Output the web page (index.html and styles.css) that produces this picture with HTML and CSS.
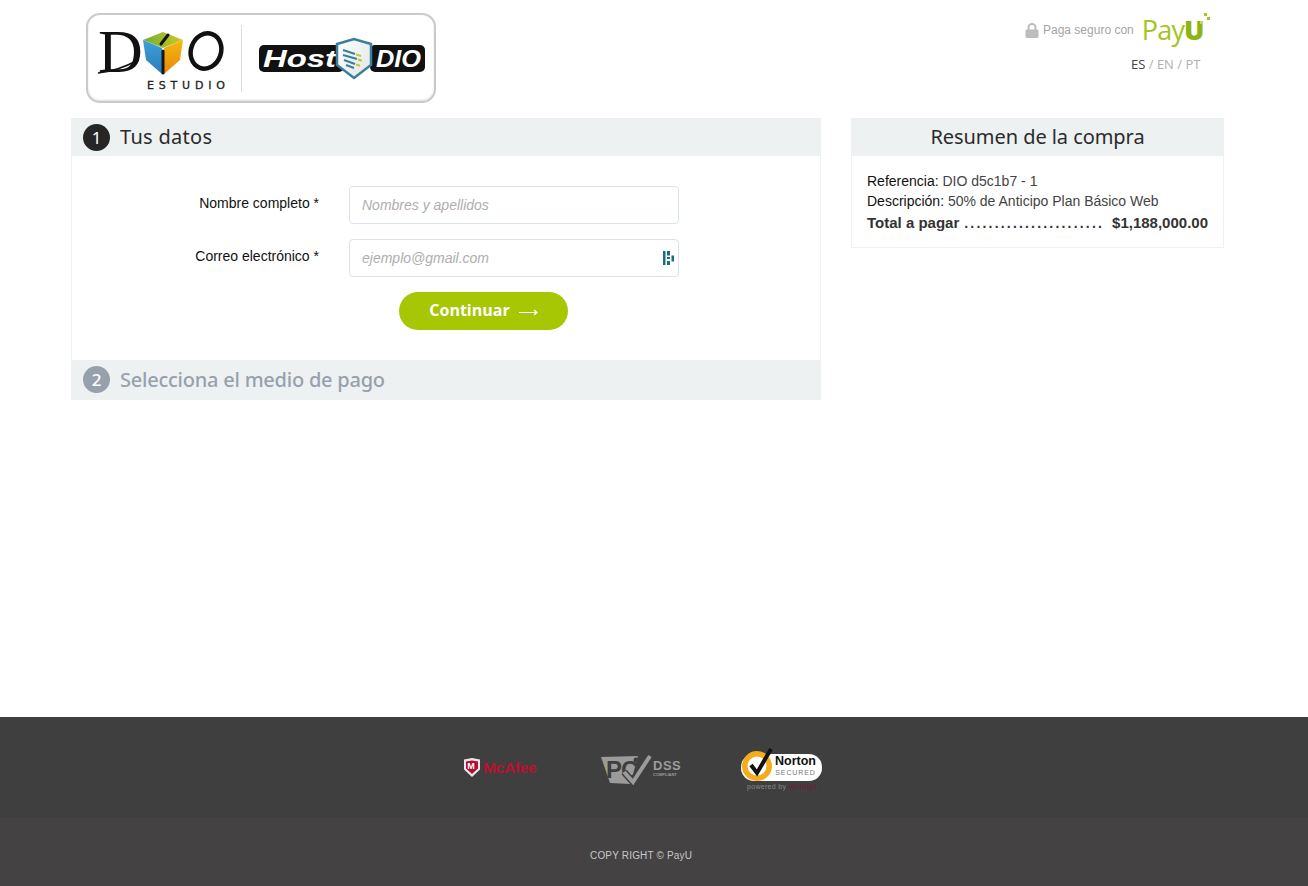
FILE: index.html
```html
<!DOCTYPE html>
<html lang="es">
<head>
<meta charset="utf-8">
<title>PayU</title>
<link rel="stylesheet" href="styles.css">
</head>
<body>
<div class="page">
  <header class="top">
    <div class="logo-box">
      <svg class="logo-svg" width="346" height="86" viewBox="0 0 346 86">
        <defs>
          <linearGradient id="cubeTop" x1="0" y1="0" x2="1" y2="0"><stop offset="0" stop-color="#6fae3a"/><stop offset="1" stop-color="#d3c81e"/></linearGradient>
          <linearGradient id="cubeRight" x1="0" y1="0" x2="0" y2="1"><stop offset="0" stop-color="#f5b90f"/><stop offset="1" stop-color="#e8860c"/></linearGradient>
          <linearGradient id="cubeLeft" x1="0" y1="0" x2="0" y2="1"><stop offset="0" stop-color="#3fa0d8"/><stop offset="1" stop-color="#2a7db8"/></linearGradient>
          <linearGradient id="shieldFill" x1="0" y1="0" x2="1" y2="1"><stop offset="0" stop-color="#ffffff"/><stop offset="1" stop-color="#dfe5e7"/></linearGradient>
        </defs>
        <text class="dio-letter" x="10" y="57">D</text>
        <path d="M10 58 Q30 56 50 45" fill="none" stroke="#111" stroke-width="1.500"/>
        <polygon points="75,17 55,25 75,33 95,25" fill="url(#cubeTop)"/>
        <polygon points="55,25 74,33 74,59 58,45" fill="url(#cubeLeft)"/>
        <polygon points="76,33 95,25 92,45 76,59" fill="url(#cubeRight)"/>
        <path d="M80 20 L73 29" stroke="#151515" stroke-width="3" stroke-linecap="round"/>
        <path d="M75 36 L75 58" stroke="#151515" stroke-width="3" stroke-linecap="round"/>
        <ellipse cx="118" cy="36" rx="15" ry="18" fill="none" stroke="#111" stroke-width="4.500" transform="rotate(20 118 36)"/>
        <text class="dio-sub" x="59" y="74" textLength="78" lengthAdjust="spacing">ESTUDIO</text>
        <rect x="153" y="10" width="1" height="67" fill="#dcdcdc"/>
        <rect x="171" y="30" width="85" height="27" rx="5" fill="#111"/>
        <rect x="282" y="30" width="55" height="27" rx="5" fill="#111"/>
        <text class="host-text" x="175" y="52" textLength="73" lengthAdjust="spacingAndGlyphs">Host</text>
        <text class="host-text" x="288" y="52" textLength="45" lengthAdjust="spacingAndGlyphs">DIO</text>
        <path d="M249 29 L266 24 L283 29 L283 50 L266 63 L249 50 Z" fill="url(#shieldFill)" stroke="#3a7f9c" stroke-width="2.500"/>
        <path d="M255 35l12 4M255 40l14 4M256 45l11 4M258 50l8 3" stroke="#3a7f9c" stroke-width="2"/>
        <path d="M268 39.500l5 1.500M270 44.500l4 1.200M268 49.500l4 1.200" stroke="#c0c92f" stroke-width="2"/>
      </svg>
    </div>
    <div class="secure">
      <div class="secure-row">
        <svg class="lock" width="14" height="15" viewBox="0 0 14 15"><path d="M3.500 7V4.500a3.500 3.500 0 0 1 7 0V7" fill="none" stroke="#bdbdbd" stroke-width="2"/><rect x="0.500" y="6.500" width="13" height="8.500" rx="1.500" fill="#bdbdbd"/></svg>
        <span class="secure-text">Paga seguro con</span>
        <span class="payu">Pay<span class="payu-u">U</span><svg class="payu-dots" width="12" height="14" viewBox="0 0 12 14"><rect x="6" y="0" width="3" height="3" fill="#a8c520"/><rect x="9" y="4" width="3" height="3" fill="#a8c520"/><rect x="2" y="8" width="3" height="3" fill="#c5d85c"/></svg></span>
      </div>
      <div class="lang"><span class="lang-on">ES</span> / EN / PT</div>
    </div>
  </header>

  <main class="columns">
    <section class="left">
      <h2 class="step-head"><span class="num">1</span>Tus datos</h2>
      <form class="form">
        <div class="field">
          <label class="field-label">Nombre completo *</label>
          <div class="input"><span class="ph">Nombres y apellidos</span></div>
        </div>
        <div class="field">
          <label class="field-label">Correo electrónico *</label>
          <div class="input"><span class="ph">ejemplo@gmail.com</span>
            <svg class="dash" width="11" height="14" viewBox="0 0 11 14"><path d="M0 0h2.500v14H0zM4 0h3v4.500H4zM4 6h3v2H4zM4 10h3v4H4zM8.500 4.500H11v6H8.500z" fill="#1b6c80"/></svg>
          </div>
        </div>
        <div class="btn-row"><button type="button" class="btn">Continuar<svg class="arrow" width="19" height="7" viewBox="0 0 19 7"><path d="M0 3.500h17M15 1l3 2.500-3 2.500" fill="none" stroke="#fff" stroke-width="1.200"/></svg></button></div>
      </form>
      <h2 class="step-head off"><span class="num">2</span>Selecciona el medio de pago</h2>
    </section>

    <aside class="right">
      <h2 class="sum-head">Resumen de la compra</h2>
      <div class="sum-body">
        <p class="sum-line"><span class="k">Referencia:</span> DIO d5c1b7 - 1</p>
        <p class="sum-line"><span class="k">Descripción:</span> 50% de Anticipo Plan Básico Web</p>
        <p class="sum-total"><span>Total a pagar</span><span class="dots">. . . . . . . . . . . . . . . . . . . . . . .</span><span class="amount">$1,188,000.00</span></p>
      </div>
    </aside>
  </main>

  <footer class="foot">
    <div class="seals">
      <div class="seal mcafee">
        <svg width="18" height="20" viewBox="0 0 18 20"><path d="M1 1.500 9 0l8 1.500v10L9 19 1 11.500z" fill="#e8e8e8"/><path d="M3 3.500 9 2.500l6 1v7L9 16l-6-5.500z" fill="#b01030"/><text x="4.300" y="11" class="m-letter">M</text></svg>
        <span>McAfee</span>
      </div>
      <div class="seal pci">
        <svg width="56" height="32" viewBox="0 0 56 32">
          <polygon points="1,3 38,2 32,24 30,30 10,29" fill="#9b9b9b" />
          <text class="pci-word" x="6" y="24">PC</text>
          <path d="M24 18 L33 28 L50 2" fill="none" stroke="#3f3f40" stroke-width="7"/>
          <path d="M24 18 L33 28 L50 2" fill="none" stroke="#9b9b9b" stroke-width="4"/>
          <circle cx="36" cy="6" r="2.500" fill="#3f3f40"/>
        </svg>
        <div class="pci-dss"><span class="dss">DSS</span><span class="comp">COMPLIANT</span></div>
      </div>
      <div class="seal norton">
        <div class="norton-pill">
          <span class="norton-badge"><svg width="32" height="36" viewBox="0 0 32 36"><circle cx="15" cy="19" r="15" fill="#f5ac1b"/><circle cx="15" cy="19" r="9.500" fill="#fff"/><path d="M9 18l6 8L29 2" fill="none" stroke="#111" stroke-width="4"/></svg></span>
          <span class="norton-text"><b>Norton</b><i>SECURED</i></span>
        </div>
        <div class="norton-by">powered by <em>VeriSign</em></div>
      </div>
    </div>
    <div class="copy">COPY RIGHT © PayU</div>
  </footer>
</div>
</body>
</html>
```
FILE: styles.css
```css
* { box-sizing: border-box; }
html, body { margin: 0; padding: 0; background: #fff; }
body { font-family: "Liberation Sans", Arial, sans-serif; color: #333; }
.page { min-height: 886px; display: flex; flex-direction: column; }

.top { height: 118px; padding: 13px 84px 0 86px; display: flex; justify-content: space-between; }
.logo-box { width: 350px; height: 90px; border: 2px solid #c9cbcb; border-radius: 14px; box-shadow: inset 0 -1px 2px #ddd; }
.logo-svg { display: block; }
.dio-letter { font: 400 62px "Liberation Serif", serif; fill: #111; }
.dio-sub { font: 400 11px "DejaVu Sans", sans-serif; fill: #222; stroke: #222; stroke-width: 0.300px; }
.host-text { font: italic 700 23px "Liberation Sans", sans-serif; fill: #fff; }

.secure { width: 199px; display: flex; flex-direction: column; align-items: flex-start; }
.secure-row { display: flex; align-items: flex-start; height: 36px; }
.lock { margin-top: 10px; flex: none; }
.secure-text { font-size: 12px; color: #a5a5a5; margin: 10px 0 0 4px; line-height: 14px; white-space: nowrap; }
.payu { position: relative; margin: -1px 0 0 8px; font: 500 27px/36px "Open Sans", sans-serif; color: #a3c520; letter-spacing: -0.800px; white-space: nowrap; }
.payu-u { font-weight: 800; color: #8cb414; }
.payu-dots { position: absolute; right: -6px; top: 1px; }
.lang { margin: 7px 0 0 106px; font: 13px/16px "Open Sans", sans-serif; color: #b0b0b0; white-space: nowrap; }
.lang-on { color: #444; }

.columns { display: flex; align-items: flex-start; gap: 30px; padding-left: 71px; }
.left { width: 750px; border: 1px solid #eef1f2; border-top: 0; }
.step-head { margin: 0; height: 38px; background: #eef1f2; display: flex; align-items: center; padding-left: 11px; font: 400 20px/26px "Noto Sans", sans-serif; color: #2b2b2b; letter-spacing: 0.300px; }
.num { width: 27px; height: 27px; border-radius: 50%; background: #262626; color: #fff; font-size: 17px; line-height: 27px; text-align: center; margin-right: 10px; flex: none; letter-spacing: 0; }
.step-head.off { height: 39px; color: #97a1ad; font-weight: 500; letter-spacing: -0.230px; }
.off .num { background: #97a1ad; }

.form { height: 204px; padding-top: 30px; }
.field { display: flex; align-items: flex-start; margin-bottom: 15px; }
.field-label { width: 247px; text-align: right; font-size: 14px; line-height: 18px; color: #111; padding-top: 8px; }
.input { margin-left: 30px; width: 330px; height: 38px; border: 1px solid #d8e3ea; border-radius: 4px; padding-left: 12px; display: flex; align-items: center; justify-content: space-between; background: #fff; }
.ph { font-size: 14px; font-style: italic; color: #aeaeae; }
.dash { margin-right: 4px; }
.btn-row { padding-left: 327px; }
.btn { width: 169px; height: 38px; border: 0; border-radius: 19px; background: #a7c604; color: #fff; font: 700 16px "Open Sans", sans-serif; display: flex; align-items: center; justify-content: center; padding: 0 0 2px; }
.arrow { margin-left: 9px; margin-top: 4px; }

.right { width: 373px; border: 1px solid #eef1f2; border-top: 0; }
.sum-head { margin: 0; height: 38px; background: #eef1f2; text-align: center; font: 400 20px/38px "Noto Sans", sans-serif; color: #2b2b2b; letter-spacing: -0.060px; }
.sum-body { padding: 15px 15px 13px; font-size: 14px; color: #444; height: 91px; }
.sum-line { margin: 0; line-height: 20px; }
.k { color: #111; }
.sum-total { margin: 1px 0 0; display: flex; font-size: 15px; font-weight: 700; line-height: 22px; color: #333; white-space: nowrap; }
.dots { margin-left: 5px; font-size: 14px; word-spacing: -2.100px; letter-spacing: 0.200px; }
.amount { margin-left: auto; }

.foot { margin-top: auto; background: #444243; }
.seals { height: 101px; background: #3f3f40; display: flex; padding-left: 463px; align-items: flex-start; position: relative; }
.seal { position: absolute; }
.mcafee { left: 463px; top: 41px; display: flex; align-items: center; gap: 2px; color: #b8122f; font-size: 15.500px; font-weight: 700; letter-spacing: -0.300px; }
.m-letter { font: 700 9px "Liberation Sans", sans-serif; fill: #fff; }
.pci { left: 600px; top: 37px; display: flex; align-items: flex-start; }
.pci-word { font: 700 24px "Liberation Sans", sans-serif; fill: #3f3f40; letter-spacing: -1px; }
.pci-dss { display: flex; flex-direction: column; margin: 5px 0 0 -3px; }
.dss { font: 700 13px/13px "Liberation Sans", sans-serif; color: #9b9b9b; letter-spacing: 0.500px; }
.comp { font: 700 4px/5px "Liberation Sans", sans-serif; color: #9b9b9b; }
.norton { left: 741px; top: 31px; }
.norton-pill { width: 81px; height: 27px; margin-top: 6px; background: #fff; border-radius: 13px; position: relative; display: flex; justify-content: flex-end; padding-right: 6px; }
.norton-badge { position: absolute; left: 1px; top: -7px; }
.norton-badge svg { display: block; }
.norton-text { display: flex; flex-direction: column; align-items: center; }
.norton-text b { font: 700 12.500px/14px "Liberation Sans", sans-serif; color: #111; }
.norton-text i { font: 400 7px/9px "Liberation Sans", sans-serif; color: #777; letter-spacing: 0.900px; }
.norton-by { font-size: 7px; color: #888; margin: 2px 0 0 6px; letter-spacing: 0.300px; white-space: nowrap; }
.norton-by em { font-style: normal; color: #7c1730; }
.copy { height: 68px; padding: 32px 0 0 590px; font-size: 10px; line-height: 12px; color: #c8c8c8; letter-spacing: 0.170px; }
```
